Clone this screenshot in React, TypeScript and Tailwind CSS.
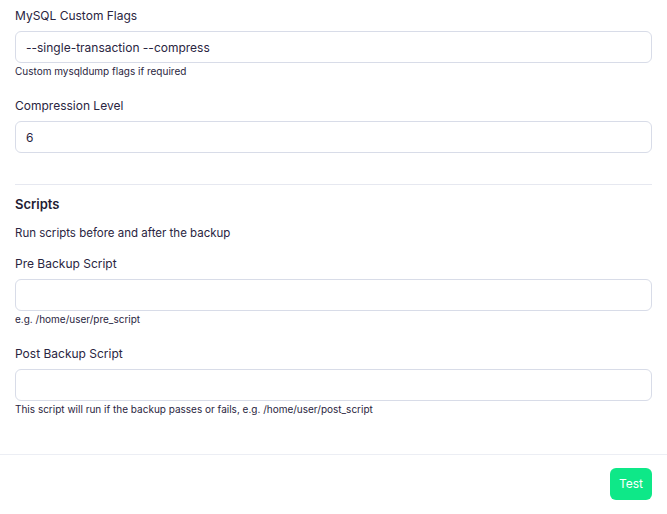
import React from "react";

// --- Champ de formulaire avec libellé et aide ---
const Field = ({ label, value, help }: { label: string; value?: string; help?: string }) => (
  <div>
    <label className="block text-[12px] leading-4 text-[#2a2541]">{label}</label>
    <input
      readOnly
      value={value ?? ""}
      className="mt-[7px] block h-8 w-full rounded-md border border-[#d8dce8] bg-white px-[10px] text-[12px] text-[#2a2541] outline-none"
    />
    {help && <p className="mt-[2px] text-[10px] leading-3 text-[#2a2541]">{help}</p>}
  </div>
);

export default function App() {
  return (
    <div className="min-h-[514px] w-full bg-white" style={{ fontFamily: "Inter, 'Noto Sans', sans-serif" }}>
      <div className="px-[15px] pt-[8px]">
        <Field label="MySQL Custom Flags" value="--single-transaction --compress" help="Custom mysqldump flags if required" />
        <div className="mt-[21px]">
          <Field label="Compression Level" value="6" />
        </div>

        <div className="mt-[31px] border-t border-[#e6e8f0]" />

        <h2 className="mt-[9px] text-[13px] font-semibold leading-5 text-[#1f1c33]">Scripts</h2>
        <p className="mt-[11px] text-[11.5px] leading-4 text-[#2a2541]">Run scripts before and after the backup</p>

        <div className="mt-[15px]">
          <Field label="Pre Backup Script" help="e.g. /home/user/pre_script" />
        </div>
        <div className="mt-[21px]">
          <Field label="Post Backup Script" help="This script will run if the backup passes or fails, e.g. /home/user/post_script" />
        </div>
      </div>

      <div className="mt-[39px] border-t border-[#eceef4]" />
      <div className="flex justify-end px-[15px] pt-[13px]">
        <button className="h-8 rounded-md bg-[#0ee888] px-[9px] text-[12px] text-white">Test</button>
      </div>
    </div>
  );
}
